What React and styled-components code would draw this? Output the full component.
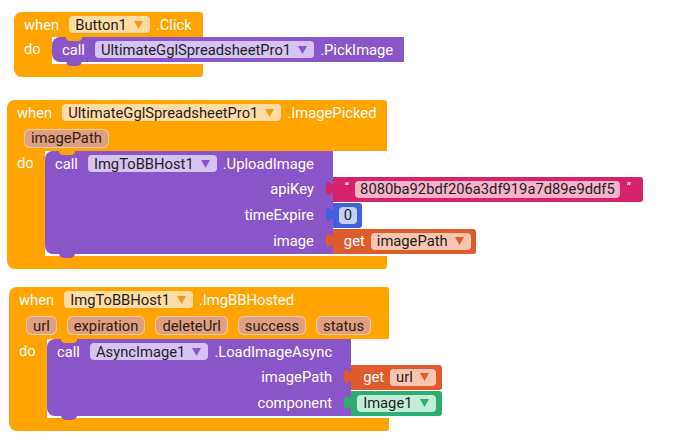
import styled, { createGlobalStyle } from 'styled-components';

const GlobalStyle = createGlobalStyle`
  body {
    margin: 0;
    background: #fff;
    font-family: Roboto, "Noto Sans", sans-serif;
  }
`;

const colors = {
  event: '#FFA400',
  eventField: '#FFDCA6',
  eventArrow: '#F39A1C',
  call: '#8A55C8',
  callField: '#D6C3F2',
  param: '#DF9F80',
  paramBorder: '#F6C9A9',
  text: '#D6226A',
  textField: '#F6B2CB',
  number: '#3F61E0',
  numberField: '#C5D0F6',
  get: '#DD5C2B',
  getField: '#F8C5B0',
  comp: '#2DAD70',
  compField: '#C2EED8',
};

const Workspace = styled.div`
  display: flex;
  flex-direction: column;
  align-items: flex-start;
  padding-top: 12px;
  font-size: 14.75px;
  color: #fff;
`;

const EventBlock = styled.div`
  display: flex;
  flex-direction: column;
  width: max-content;
  margin-left: ${p => p.$x}px;
  margin-top: ${p => p.$gap || 0}px;
`;

const EventHeader = styled.div`
  background: ${colors.event};
  border-radius: 8px 3px 0 0;
  display: flex;
  flex-direction: column;
`;

const HeaderRow = styled.div`
  display: flex;
  align-items: center;
  height: ${p => p.$h || 25}px;
  padding: 0 11px 0 10px;
  white-space: nowrap;
`;

const ParamRow = styled.div`
  display: flex;
  align-items: center;
  gap: 12px;
  height: ${p => p.$h || 25}px;
  padding: 0 19px 0 18px;
`;

const Param = styled.span`
  display: inline-flex;
  align-items: center;
  height: 17px;
  padding: 0 6px;
  border-radius: 5px;
  background: ${colors.param};
  box-shadow: 0 0 0 1px ${colors.paramBorder};
  color: #2b1d16;
`;

const Keyword = styled.span`
  margin-right: 10px;
`;

const Method = styled.span`
  margin-left: 6px;
`;

const Field = styled.span`
  display: inline-flex;
  align-items: center;
  gap: 7px;
  height: 17px;
  padding: 0 ${p => (p.$arrow ? 7 : 5)}px 0 ${p => (p.$arrow ? 6 : 5)}px;
  border-radius: 4px;
  background: ${p => p.$bg};
  color: #1e1e1e;
  white-space: nowrap;
`;

const DoRow = styled.div`
  display: flex;
  width: 0;
  min-width: 100%;
`;

const DoColumn = styled.div`
  flex: 0 0 38px;
  background: ${colors.event};
  padding-left: 10px;
  box-sizing: border-box;
`;

const DoLabel = styled.div`
  height: 25px;
  line-height: 25px;
`;

const Arm = styled.div`
  height: 13px;
  background: ${colors.event};
  border-radius: 0 0 3px 8px;
`;

const CallBlock = styled.div`
  display: flex;
  align-items: flex-start;
  flex-shrink: 0;
  margin-bottom: 2px;
`;

const CallBody = styled.div`
  position: relative;
  display: flex;
  flex-direction: column;
  background: ${colors.call};
  border-radius: 8px 0 0 8px;
  padding: 0 ${p => (p.$inputs ? 19 : 11)}px 0 10px;
  white-space: nowrap;

  &::before {
    content: '';
    position: absolute;
    top: 0;
    left: 14px;
    width: 16px;
    height: 4px;
    background: ${colors.event};
    border-radius: 0 0 7px 7px;
  }

  &::after {
    content: '';
    position: absolute;
    bottom: -4px;
    left: 14px;
    width: 16px;
    height: 5px;
    background: ${colors.call};
    border-radius: 0 0 7px 7px;
  }
`;

const CallHeader = styled.div`
  display: flex;
  align-items: center;
  height: 25px;
`;

const InputLabel = styled.div`
  display: flex;
  align-items: center;
  justify-content: flex-end;
  height: 26px;
`;

const Sockets = styled.div`
  display: flex;
  flex-direction: column;
  padding-top: 25px;
`;

const Socket = styled.div`
  display: flex;
  align-items: center;
  height: 26px;
`;

const ValueBlock = styled.div`
  position: relative;
  display: flex;
  align-items: center;
  height: 25px;
  padding: 0 ${p => p.$pr}px 0 ${p => p.$pl}px;
  background: ${p => p.$bg};
  border-radius: 0 3px 3px 0;
  white-space: nowrap;
`;

const TabSvg = styled.svg`
  position: absolute;
  left: -8px;
  top: 0;
`;

const Quote = styled.span`
  font-size: 12px;
  align-self: flex-start;
  margin: 4px ${p => p.$r || 0}px 0 ${p => p.$l || 0}px;
`;

const GetWord = styled.span`
  margin-right: 6px;
`;

function Arrow({ color }) {
  return (
    <svg width="9" height="8" viewBox="0 0 9 8">
      <polygon points="0,0 9,0 4.5,8" fill={color} />
    </svg>
  );
}

function Tab({ color }) {
  return (
    <TabSvg width="9" height="25" viewBox="0 0 9 25">
      <path d="M9 4 C9 14 1 -4 1 11.5 S9 9 9 19 Z" fill={color} />
    </TabSvg>
  );
}

function Dropdown({ bg, arrow, children }) {
  return (
    <Field $bg={bg} $arrow>
      {children}
      <Arrow color={arrow} />
    </Field>
  );
}

function Value({ bg, pl, pr, children }) {
  return (
    <ValueBlock $bg={bg} $pl={pl} $pr={pr}>
      <Tab color={bg} />
      {children}
    </ValueBlock>
  );
}

function Call({ component, method, inputs = [] }) {
  return (
    <CallBlock>
      <CallBody $inputs={inputs.length > 0}>
        <CallHeader>
          <Keyword>call</Keyword>
          <Dropdown bg={colors.callField} arrow={colors.call}>
            {component}
          </Dropdown>
          <Method>.{method}</Method>
        </CallHeader>
        {inputs.map(i => (
          <InputLabel key={i.name}>{i.name}</InputLabel>
        ))}
      </CallBody>
      {inputs.length > 0 && (
        <Sockets>
          {inputs.map(i => (
            <Socket key={i.name}>{i.value}</Socket>
          ))}
        </Sockets>
      )}
    </CallBlock>
  );
}

function Event({ x, gap, component, event, params, paramsHeight, children }) {
  return (
    <EventBlock $x={x} $gap={gap}>
      <EventHeader>
        <HeaderRow>
          <Keyword>when</Keyword>
          <Dropdown bg={colors.eventField} arrow={colors.eventArrow}>
            {component}
          </Dropdown>
          <Method>.{event}</Method>
        </HeaderRow>
        {params && (
          <ParamRow $h={paramsHeight}>
            {params.map(p => (
              <Param key={p}>{p}</Param>
            ))}
          </ParamRow>
        )}
      </EventHeader>
      <DoRow>
        <DoColumn>
          <DoLabel>do</DoLabel>
        </DoColumn>
        {children}
      </DoRow>
      <Arm />
    </EventBlock>
  );
}

export default function App() {
  return (
    <>
      <GlobalStyle />
      <Workspace>
        <Event x={14} component="Button1" event="Click">
          <Call component="UltimateGglSpreadsheetPro1" method="PickImage" />
        </Event>

        <Event
          x={7}
          gap={23}
          component="UltimateGglSpreadsheetPro1"
          event="ImagePicked"
          params={['imagePath']}
          paramsHeight={26}
        >
          <Call
            component="ImgToBBHost1"
            method="UploadImage"
            inputs={[
              {
                name: 'apiKey',
                value: (
                  <Value bg={colors.text} pl={12} pr={12}>
                    <Quote $r={6}>“</Quote>
                    <Field $bg={colors.textField}>8080ba92bdf206a3df919a7d89e9ddf5</Field>
                    <Quote $l={7}>”</Quote>
                  </Value>
                ),
              },
              {
                name: 'timeExpire',
                value: (
                  <Value bg={colors.number} pl={6} pr={5}>
                    <Field $bg={colors.numberField}>0</Field>
                  </Value>
                ),
              },
              {
                name: 'image',
                value: (
                  <Value bg={colors.get} pl={11} pr={5}>
                    <GetWord>get</GetWord>
                    <Dropdown bg={colors.getField} arrow={colors.get}>
                      imagePath
                    </Dropdown>
                  </Value>
                ),
              },
            ]}
          />
        </Event>

        <Event
          x={9}
          gap={18}
          component="ImgToBBHost1"
          event="ImgBBHosted"
          params={['url', 'expiration', 'deleteUrl', 'success', 'status']}
          paramsHeight={27}
        >
          <Call
            component="AsyncImage1"
            method="LoadImageAsync"
            inputs={[
              {
                name: 'imagePath',
                value: (
                  <Value bg={colors.get} pl={12} pr={6}>
                    <GetWord>get</GetWord>
                    <Dropdown bg={colors.getField} arrow={colors.get}>
                      url
                    </Dropdown>
                  </Value>
                ),
              },
              {
                name: 'component',
                value: (
                  <Value bg={colors.comp} pl={6} pr={6}>
                    <Dropdown bg={colors.compField} arrow={colors.comp}>
                      Image1
                    </Dropdown>
                  </Value>
                ),
              },
            ]}
          />
        </Event>
      </Workspace>
    </>
  );
}
